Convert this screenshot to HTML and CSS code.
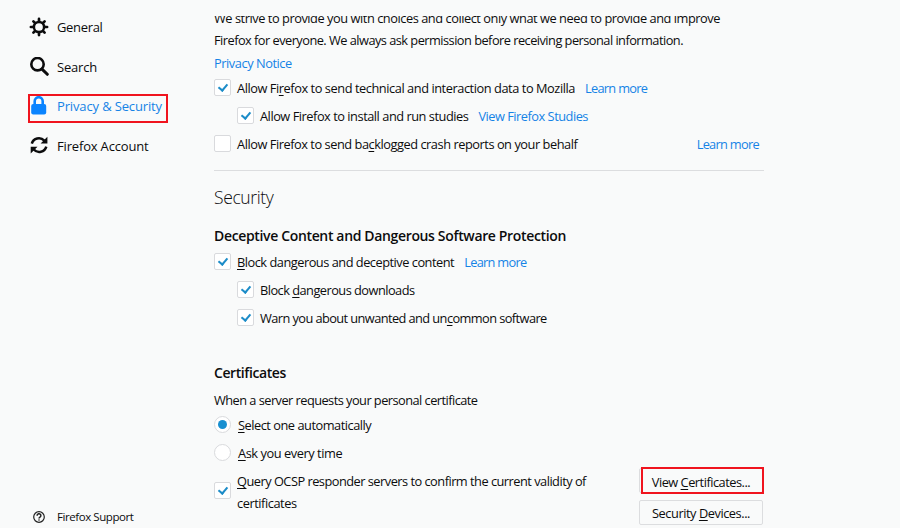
FILE: index.html
```html
<!DOCTYPE html>
<html lang="en">
<head>
<meta charset="utf-8">
<title>Privacy &amp; Security</title>
<link rel="stylesheet" href="styles.css">
</head>
<body>
<div class="page">
  <nav class="sidebar">
    <a class="nav"><svg class="icon" viewBox="0 0 20 20"><g stroke="#0c0c0d" fill="none"><circle cx="10" cy="10" r="5.1" stroke-width="2.5"/><path stroke-width="2.7" stroke-linecap="round" d="M10 4V1.9M10 16v2.1M4 10H1.9M16 10h2.1M5.8 5.8L4.4 4.4M14.2 5.8l1.4-1.4M5.8 14.2l-1.4 1.4M14.2 14.2l1.4 1.4"/></g></svg><span class="t1">General</span></a>
    <a class="nav"><svg class="icon" viewBox="0 0 20 20"><g stroke="#0c0c0d" fill="none" stroke-linecap="round"><circle cx="8.5" cy="7.2" r="6.2" stroke-width="2.6"/><path stroke-width="3" d="M13 12.1l5.3 5.2"/></g></svg><span class="t2">Search</span></a>
    <a class="nav selected"><svg class="icon" viewBox="0 0 20 20"><path fill="none" stroke="#0a84ff" stroke-width="2.6" d="M5.7 9V5.2a4 4 0 0 1 8 0V9"/><rect x="2.2" y="8" width="15" height="10.4" rx="2" fill="#0a84ff"/></svg><span class="t3">Privacy &amp; Security</span></a>
    <a class="nav"><svg class="icon" viewBox="0 0 20 20"><g fill="none" stroke="#0c0c0d" stroke-width="2.5"><path d="M2.8 7.6A7.3 7.3 0 0 1 15.3 4.7M17.3 10.6A7.3 7.3 0 0 1 4.8 13.5"/></g><path d="M18.4.8v6.8h-6.8zM1.7 17.5v-6.8h6.8z" fill="#0c0c0d"/></svg><span class="t4">Firefox Account</span></a>
    <a class="nav support"><svg class="icon" viewBox="0 0 20 20"><circle cx="10" cy="10" r="5.3" fill="none" stroke="#222" stroke-width="1.2"/><path d="M8.1 8.7a1.9 1.8 0 1 1 2.9 1.4c-.7.5-1 .7-1 1.4" fill="none" stroke="#222" stroke-width="1.5"/><circle cx="10" cy="13" r=".8" fill="#222"/></svg><span class="t5">Firefox Support</span></a>
  </nav>
  <main class="content">
    <div class="intro">
      <div><span class="t6">We strive to provide you with choices and collect only what we need to provide and improve</span></div>
      <div><span class="t7">Firefox for everyone. We always ask permission before receiving personal information.</span></div>
      <div><a class="link t8">Privacy Notice</a></div>
    </div>
    <div class="row"><i class="box on"></i><span class="t9">Allow Fi<u>r</u>efox to send technical and interaction data to Mozilla</span><a class="link lm">Learn more</a></div>
    <div class="row sub"><i class="box on"></i><span class="t10">Allow Firefox to install and run studies</span><a class="link t11">View Firefox Studies</a></div>
    <div class="row"><i class="box"></i><span class="t12">Allow Firefox to send ba<u>c</u>klogged crash reports on your behalf</span><a class="link lm far">Learn more</a></div>
    <hr>
    <h1><span class="t13">Security</span></h1>
    <h2><span class="t14">Deceptive Content and Dangerous Software Protection</span></h2>
    <div class="row"><i class="box on"></i><span class="t15"><u>B</u>lock dangerous and deceptive content</span><a class="link lm">Learn more</a></div>
    <div class="row sub"><i class="box on"></i><span class="t16">Block <u>d</u>angerous downloads</span></div>
    <div class="row sub"><i class="box on"></i><span class="t17">Warn you about unwanted and un<u>c</u>ommon software</span></div>
    <h2 class="certs"><span class="t18">Certificates</span></h2>
    <p><span class="t19">When a server requests your personal certificate</span></p>
    <div class="row"><i class="box radio chosen"></i><span class="t20"><u>S</u>elect one automatically</span></div>
    <div class="row"><i class="box radio"></i><span class="t21"><u>A</u>sk you every time</span></div>
    <div class="ocsp">
      <i class="box on"></i>
      <div class="query"><span class="t22"><u>Q</u>uery OCSP responder servers to confirm the current validity of</span><br><span class="t23">certificates</span></div>
      <div class="buttons"><a class="button marked"><span class="t24">View <u>C</u>ertificates...</span></a><a class="button"><span class="t25">Security <u>D</u>evices...</span></a></div>
    </div>
  </main>
</div>
</body>
</html>
```
FILE: styles.css
```css
*,*::after{box-sizing:border-box}
body{margin:0;background:#f9fafa;color:#0c0c0d;font:12.8px/22px "Open Sans","Noto Sans",sans-serif;overflow:hidden}
u{text-decoration-thickness:1px;text-underline-offset:2px;text-decoration-skip-ink:none}
.page{display:flex;height:528px}
.sidebar{width:214px;padding:7px 0 0 28px;display:flex;flex-direction:column}
.nav{position:relative;display:flex;align-items:center;width:140px;height:39.7px;gap:8px;padding-left:1px;font-size:13px;white-space:nowrap}
.icon{width:20px;height:20px;flex:none}
.selected{color:#1583e6}
.selected::after{content:"";position:absolute;left:0;top:8px;width:140px;height:29px;border:2px solid #f0141e}
.support{margin-top:auto;height:22px;font-size:11.5px}
.content{width:550px}
.intro{margin-top:16px;height:58px;line-height:22.5px;overflow:hidden;display:flex;flex-direction:column;justify-content:flex-end;white-space:nowrap}
.row{display:flex;align-items:center;height:28px;white-space:nowrap}
.box{position:relative;width:17px;height:17px;flex:none;border:1px solid #d9dadd;border-radius:2px;background:#fff;margin:-1px 6px 0 0}
.on::after{content:"";position:absolute;left:5px;top:2px;width:6px;height:9px;border:solid #1c8cc8;border-width:0 2px 2px 0;transform:rotate(40deg)}
.radio{border-radius:50%;margin-right:7px}
.chosen::after{content:"";position:absolute;left:3px;top:3px;width:9px;height:9px;border-radius:50%;background:#188fd0}
.sub{padding-left:23px}
.link{color:#1583e6}
.row .link{margin-left:10px}
.row .far{margin-left:auto;margin-right:5px}
hr{border:0;border-top:1px solid #dcdddf;margin:12px 0 0}
h1{font-size:17.5px;font-weight:300;line-height:28px;margin:12px 0 0}
h2{font-size:14px;font-weight:600;line-height:24px;margin:13px 0 0}
.certs{margin-top:29px}
p{margin:4px 0 0}
.ocsp{display:flex;white-space:nowrap}
.ocsp .box{margin-top:15px}
.query{flex:1;padding-top:3px}
.buttons{display:flex;flex-direction:column;gap:7px;width:124px;margin:1px 1px 0 0}
.button{position:relative;display:flex;align-items:center;justify-content:center;height:25px;border:1px solid #dcdddf;border-radius:2px}
.marked{padding-top:2px}
.marked::after{content:"";position:absolute;left:1px;top:-2px;width:123px;height:27px;border:2px solid #f0141e}
.t1{letter-spacing:-.33px}
.t2{letter-spacing:-.2px}
.t3{letter-spacing:-.14px}
.t4{letter-spacing:-.17px}
.t5{letter-spacing:-.43px}
.t6{letter-spacing:-.455px}
.t7{letter-spacing:-.53px}
.t8{letter-spacing:-.44px}
.t9{letter-spacing:-.443px}
.lm{letter-spacing:-.7px}
.t10{letter-spacing:-.47px}
.t11{letter-spacing:-.49px}
.t12{letter-spacing:-.46px}
.t13{letter-spacing:-.38px}
.t14{letter-spacing:-.35px}
.t15{letter-spacing:-.49px}
.t16{letter-spacing:-.53px}
.t17{letter-spacing:-.58px}
.t18{letter-spacing:-.42px}
.t19{letter-spacing:-.54px}
.t20{letter-spacing:-.48px}
.t21{letter-spacing:-.44px}
.t22{letter-spacing:-.51px}
.t23{letter-spacing:-.45px}
.t24{letter-spacing:-.49px}
.t25{letter-spacing:-.45px}
```
